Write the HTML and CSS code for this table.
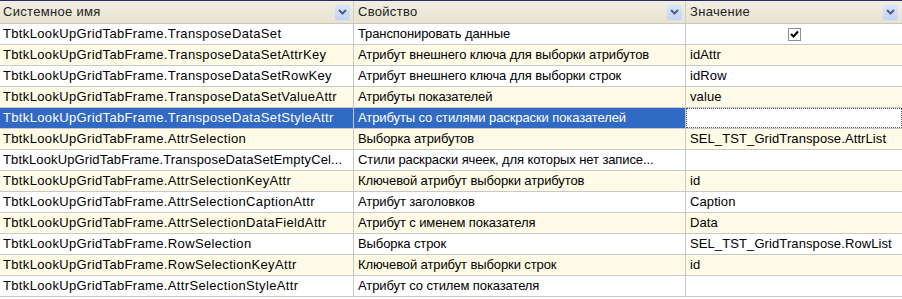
FILE: index.html
```html
<!DOCTYPE html>
<html>
<head>
<meta charset="utf-8">
<link rel="stylesheet" href="styles.css">
</head>
<body>
<div class="grid">
  <div class="row head">
    <div class="cell c1"><span class="htxt">Системное имя</span><span class="dd"><svg width="9" height="6" viewBox="0 0 9 6"><path d="M1 1 L4.5 4.5 L8 1" fill="none" stroke="#4d6185" stroke-width="2"/></svg></span></div>
    <div class="cell c2"><span class="htxt">Свойство</span><span class="dd"><svg width="9" height="6" viewBox="0 0 9 6"><path d="M1 1 L4.5 4.5 L8 1" fill="none" stroke="#4d6185" stroke-width="2"/></svg></span></div>
    <div class="cell c3"><span class="htxt">Значение</span><span class="dd"><svg width="9" height="6" viewBox="0 0 9 6"><path d="M1 1 L4.5 4.5 L8 1" fill="none" stroke="#4d6185" stroke-width="2"/></svg></span></div>
  </div>
  <div class="row w"><div class="cell c1">TbtkLookUpGridTabFrame.TransposeDataSet</div><div class="cell c2">Транспонировать данные</div><div class="cell c3 center"><span class="chk"><svg width="9" height="8" viewBox="0 0 9 8"><path d="M1 4 L3.5 6.5 L8 1.5" fill="none" stroke="#000" stroke-width="2"/></svg></span></div></div>
  <div class="row y"><div class="cell c1">TbtkLookUpGridTabFrame.TransposeDataSetAttrKey</div><div class="cell c2">Атрибут внешнего ключа для выборки атрибутов</div><div class="cell c3">idAttr</div></div>
  <div class="row w"><div class="cell c1">TbtkLookUpGridTabFrame.TransposeDataSetRowKey</div><div class="cell c2">Атрибут внешнего ключа для выборки строк</div><div class="cell c3">idRow</div></div>
  <div class="row y"><div class="cell c1">TbtkLookUpGridTabFrame.TransposeDataSetValueAttr</div><div class="cell c2">Атрибуты показателей</div><div class="cell c3">value</div></div>
  <div class="row sel"><div class="cell c1">TbtkLookUpGridTabFrame.TransposeDataSetStyleAttr</div><div class="cell c2">Атрибуты со стилями раскраски показателей</div><div class="cell c3 focus"></div></div>
  <div class="row y"><div class="cell c1">TbtkLookUpGridTabFrame.AttrSelection</div><div class="cell c2">Выборка атрибутов</div><div class="cell c3">SEL_TST_GridTranspose.AttrList</div></div>
  <div class="row w"><div class="cell c1 tight">TbtkLookUpGridTabFrame.TransposeDataSetEmptyCel...</div><div class="cell c2">Стили раскраски ячеек, для которых нет записе...</div><div class="cell c3"></div></div>
  <div class="row y"><div class="cell c1">TbtkLookUpGridTabFrame.AttrSelectionKeyAttr</div><div class="cell c2">Ключевой атрибут выборки атрибутов</div><div class="cell c3">id</div></div>
  <div class="row w"><div class="cell c1">TbtkLookUpGridTabFrame.AttrSelectionCaptionAttr</div><div class="cell c2">Атрибут заголовков</div><div class="cell c3">Caption</div></div>
  <div class="row y"><div class="cell c1">TbtkLookUpGridTabFrame.AttrSelectionDataFieldAttr</div><div class="cell c2">Атрибут с именем показателя</div><div class="cell c3">Data</div></div>
  <div class="row w"><div class="cell c1">TbtkLookUpGridTabFrame.RowSelection</div><div class="cell c2">Выборка строк</div><div class="cell c3">SEL_TST_GridTranspose.RowList</div></div>
  <div class="row y"><div class="cell c1">TbtkLookUpGridTabFrame.RowSelectionKeyAttr</div><div class="cell c2">Ключевой атрибут выборки строк</div><div class="cell c3">id</div></div>
  <div class="row w"><div class="cell c1">TbtkLookUpGridTabFrame.AttrSelectionStyleAttr</div><div class="cell c2">Атрибут со стилем показателя</div><div class="cell c3"></div></div>
</div>
</body>
</html>
```
FILE: styles.css
```css
html, body {
  margin: 0;
  padding: 0;
  background: #ffffff;
}
.grid {
  width: 902px;
  height: 299px;
  font-family: "Liberation Sans", Arial, sans-serif;
  font-size: 13px;
  color: #000;
  background: #fff;
  border-top: 1px solid #2b2b6b;
  box-sizing: border-box;
  overflow: hidden;
}
.row {
  display: flex;
  height: 21px;
  border-bottom: 1px solid #c8c8c8;
  box-sizing: border-box;
}
.row.head {
  height: 23px;
  background: linear-gradient(#f1efe2, #e6e3d3);
  border-bottom: 1px solid #c9c6b6;
}
.cell {
  box-sizing: border-box;
  padding-left: 4px;
  line-height: 20px;
  white-space: nowrap;
  overflow: hidden;
  border-right: 1px solid #c8c8c8;
}
.c1 { width: 354px; letter-spacing: 0.35px; padding-left: 3px; }
.c1.tight { letter-spacing: 0.15px; }
.c2 { width: 332px; letter-spacing: -0.1px; }
.c3 { width: 216px; border-right: none; letter-spacing: 0.1px; }
.head .cell {
  display: flex;
  align-items: center;
  justify-content: space-between;
  padding-right: 3px;
  line-height: 22px;
  border-right: 1px solid #d4d0c0;
  color: #222;
  letter-spacing: 0.3px;
}
.head .c3 { border-right: none; padding-right: 4px; }
.dd {
  width: 15px;
  height: 15px;
  background: linear-gradient(#dbe6fb, #c1d3f6);
  border-radius: 2px;
  display: flex;
  align-items: center;
  justify-content: center;
}
.y { background: #fffbe6; }
.w { background: #ffffff; }
.sel .c1, .sel .c2 {
  background: #316ac5;
  color: #fff;
}
.sel .c3.focus {
  background: #fff;
  outline: 1px dotted #555;
  outline-offset: -1px;
}
.center {
  display: flex;
  align-items: center;
  justify-content: center;
  padding-left: 0;
}
.chk {
  width: 11px;
  height: 11px;
  border: 1px solid #8f8f8f;
  background: #fff;
  display: flex;
  align-items: center;
  justify-content: center;
}
```
